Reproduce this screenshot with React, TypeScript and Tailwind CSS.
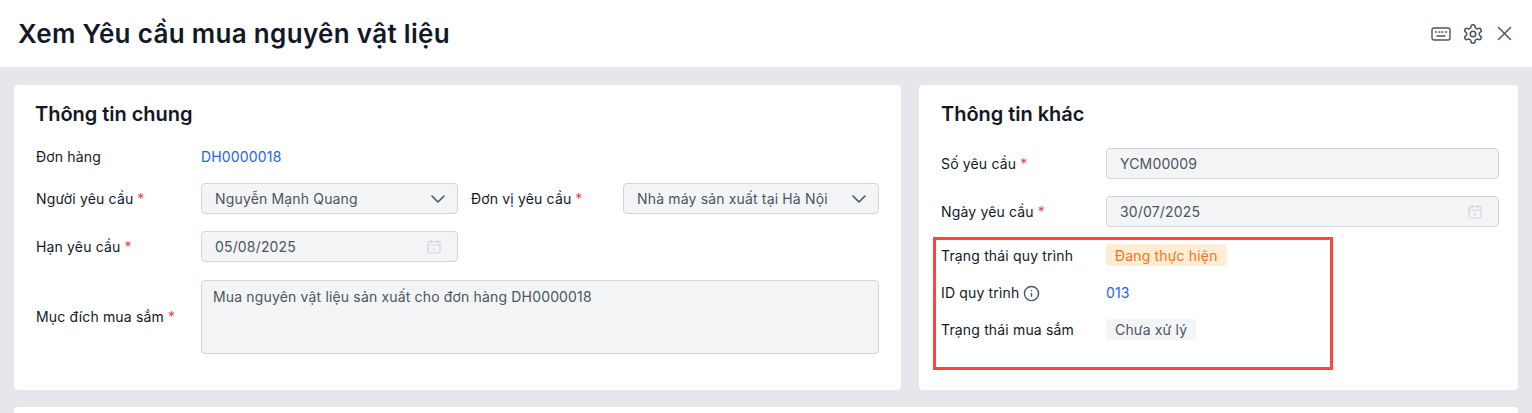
import { Info } from 'lucide-react';
import type { ReactNode } from 'react';

function Req() {
  return <span className="ml-1 text-[#ef4444]">*</span>;
}

function Chevron() {
  return (
    <svg className="-mr-[4px]" width="14" height="8" viewBox="0 0 14 8" fill="none" stroke="#4b5563" strokeWidth="1.6" strokeLinecap="round" strokeLinejoin="round">
      <path d="M1 1l6 6 6-6" />
    </svg>
  );
}

function CalendarIcon() {
  return (
    <svg width="14" height="15" viewBox="0 0 14 15" fill="none" stroke="#d1d5db" strokeWidth="1.2">
      <rect x="1" y="2.5" width="12" height="11.5" rx="1.5" />
      <path d="M1 6h12M4 1v3M10 1v3M7 9v3" />
    </svg>
  );
}

function Field({ children, right }: { children: ReactNode; right?: ReactNode }) {
  return (
    <div className="flex h-[31px] w-full items-center justify-between rounded border border-[#d1d5db] bg-[#f3f4f6] pl-[13px] pr-[16px] text-[#4b5563]">
      <span>{children}</span>
      {right}
    </div>
  );
}

function Label({ children }: { children: ReactNode }) {
  return <div className="w-[165px] shrink-0 text-[#111827]">{children}</div>;
}

function TopIcons() {
  return (
    <div className="flex items-center">
      <svg width="20" height="14" viewBox="0 0 20 14" fill="none" stroke="#4b5563" strokeWidth="1.4">
        <rect x="1" y="1" width="18" height="12" rx="2" />
        <path d="M4.5 5h1M8 5h1M11 5h1M14.5 5h1M6 9h8" strokeLinecap="round" />
      </svg>
      <svg className="ml-[11px]" width="22" height="22" viewBox="0 0 24 24" fill="none" stroke="#4b5563" strokeWidth="1.7" strokeLinecap="round" strokeLinejoin="round">
        <path d="M12.22 2h-.44a2 2 0 0 0-2 2v.18a2 2 0 0 1-1 1.73l-.43.25a2 2 0 0 1-2 0l-.15-.08a2 2 0 0 0-2.73.73l-.22.38a2 2 0 0 0 .73 2.73l.15.1a2 2 0 0 1 1 1.72v.51a2 2 0 0 1-1 1.74l-.15.09a2 2 0 0 0-.73 2.73l.22.38a2 2 0 0 0 2.73.73l.15-.08a2 2 0 0 1 2 0l.43.25a2 2 0 0 1 1 1.73V20a2 2 0 0 0 2 2h.44a2 2 0 0 0 2-2v-.18a2 2 0 0 1 1-1.73l.43-.25a2 2 0 0 1 2 0l.15.08a2 2 0 0 0 2.73-.73l.22-.39a2 2 0 0 0-.73-2.73l-.15-.08a2 2 0 0 1-1-1.74v-.5a2 2 0 0 1 1-1.74l.15-.09a2 2 0 0 0 .73-2.73l-.22-.38a2 2 0 0 0-2.73-.73l-.15.08a2 2 0 0 1-2 0l-.43-.25a2 2 0 0 1-1-1.73V4a2 2 0 0 0-2-2z" />
        <circle cx="12" cy="12" r="3" />
      </svg>
      <svg className="ml-[13px]" width="15" height="15" viewBox="0 0 15 15" fill="none" stroke="#4b5563" strokeWidth="1.5" strokeLinecap="round">
        <path d="M1.5 1.5l12 12M13.5 1.5l-12 12" />
      </svg>
    </div>
  );
}

export default function App() {
  return (
    <div className="h-[413px] w-[1532px] overflow-hidden bg-[#e5e7eb] font-['Inter',sans-serif] text-sm tracking-[0.16px]">
      <header className="flex h-[67px] items-center justify-between bg-white pl-[18px] pr-[20px]">
        <h1 className="text-[26px] font-semibold tracking-[0.32px] text-[#111827]">Xem Yêu cầu mua nguyên vật liệu</h1>
        <TopIcons />
      </header>

      <div className="flex gap-[18px] px-[14px] pt-[18px]">
        <section className="h-[305px] w-[887px] rounded bg-white pl-[22px] pr-[22px] pt-[16px]">
          <h2 className="-ml-px text-[20px] font-semibold leading-[26px] tracking-[-0.03px] text-[#111827]">Thông tin chung</h2>
          <div className="mt-[17px] flex h-[26px] items-center">
            <Label>Đơn hàng</Label>
            <span className="text-[#2563eb]">DH0000018</span>
          </div>
          <div className="mt-[13px] flex items-center">
            <Label>
              Người yêu cầu
              <Req />
            </Label>
            <div className="w-[257px]">
              <Field right={<Chevron />}>Nguyễn Mạnh Quang</Field>
            </div>
            <div className="ml-[13px] w-[152px] text-[#111827]">
              Đơn vị yêu cầu
              <Req />
            </div>
            <div className="w-[256px]">
              <Field right={<Chevron />}>Nhà máy sản xuất tại Hà Nội</Field>
            </div>
          </div>
          <div className="mt-[17px] flex items-center">
            <Label>
              Hạn yêu cầu
              <Req />
            </Label>
            <div className="w-[257px]">
              <Field right={<CalendarIcon />}>05/08/2025</Field>
            </div>
          </div>
          <div className="mt-[18px] flex items-center">
            <Label>
              Mục đích mua sắm
              <Req />
            </Label>
            <div className="h-[74px] w-[678px] rounded border border-[#d1d5db] bg-[#f3f4f6] px-[11px] py-[6px] text-[#4b5563]">
              Mua nguyên vật liệu sản xuất cho đơn hàng DH0000018
            </div>
          </div>
        </section>

        <section className="relative h-[305px] w-[599px] rounded bg-white pl-[22px] pr-[19px] pt-[16px]">
          <h2 className="text-[20px] font-semibold leading-[26px] tracking-[-0.03px] text-[#111827]">Thông tin khác</h2>
          <div className="mt-[21px] flex items-center">
            <Label>
              Số yêu cầu
              <Req />
            </Label>
            <Field>YCM00009</Field>
          </div>
          <div className="mt-[17px] flex items-center">
            <Label>
              Ngày yêu cầu
              <Req />
            </Label>
            <Field right={<CalendarIcon />}>30/07/2025</Field>
          </div>
          <div className="mt-[17px] flex h-[22px] items-center">
            <div className="w-[165px] shrink-0 pt-px text-[#111827]">Trạng thái quy trình</div>
            <span className="rounded bg-[#ffedd5] px-[9px] pt-px leading-[21px] text-[#f97316]">Đang thực hiện</span>
          </div>
          <div className="mt-[16px] flex h-[22px] items-center">
            <div className="flex w-[165px] shrink-0 items-center gap-[4px] text-[#111827]">
              <span className="-mt-px">ID quy trình</span>
              <Info size={17} strokeWidth={2} className="text-[#4b5563]" />
            </div>
            <span className="text-[#2563eb]">013</span>
          </div>
          <div className="mt-[14px] flex h-[22px] items-center">
            <div className="w-[165px] shrink-0 pt-px text-[#111827]">Trạng thái mua sắm</div>
            <span className="rounded bg-[#f3f4f6] px-[9px] leading-[21px] text-[#4b5563]">Chưa xử lý</span>
          </div>
          <div className="absolute left-[14px] top-[152px] h-[133px] w-[400px] border-[3px] border-[#fb4444]" />
        </section>
      </div>

      <div className="mx-[14px] mt-[17px] h-[40px] rounded bg-white" />
    </div>
  );
}
